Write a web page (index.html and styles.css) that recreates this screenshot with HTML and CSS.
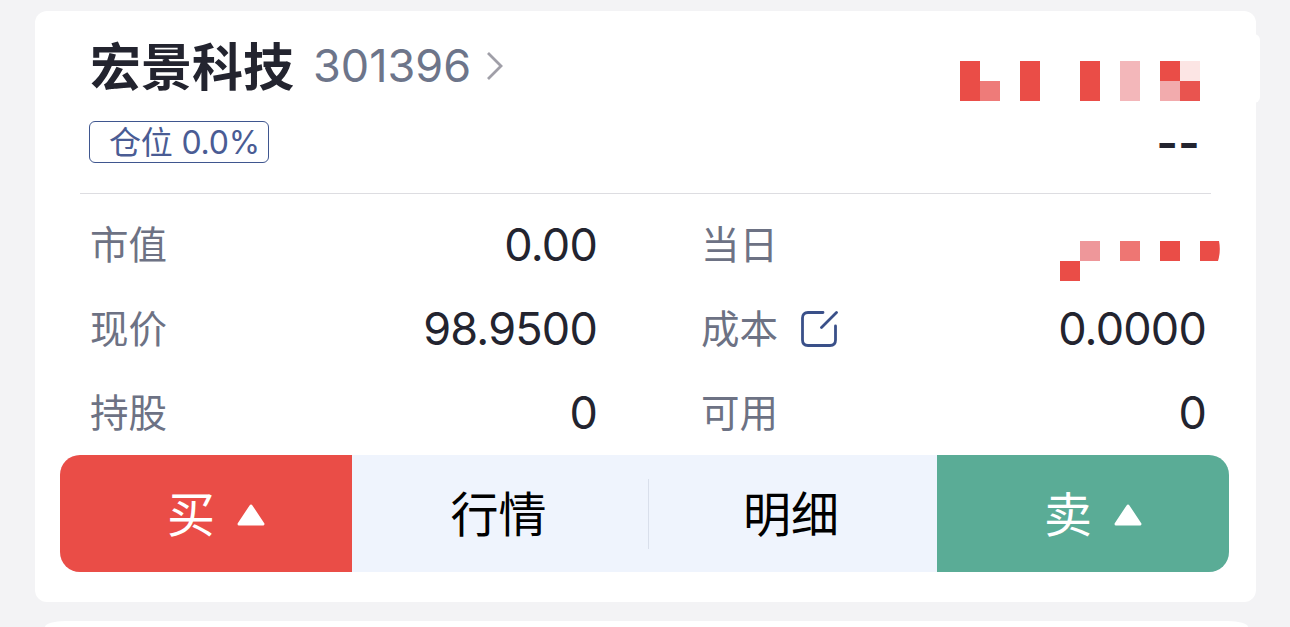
FILE: index.html
```
<!DOCTYPE html>
<html lang="zh-CN">
<head>
    <meta charset="UTF-8">
    <meta name="viewport" content="width=device-width, initial-scale=1.0">
    <title>持仓</title>
    <link rel="stylesheet" href="styles.css">
</head>
<body>
    <div class="card">
        <div class="card-header">
            <div class="stock">
                <div class="stock-title">
                    <h1>宏景科技</h1>
                    <span class="code">301396</span>
                    <svg class="chevron" width="18" height="30" viewBox="0 0 18 30">
                        <path d="M2 2 L15 15 L2 28" fill="none" stroke="#a09fa8" stroke-width="2.8"/>
                    </svg>
                </div>
                <span class="tag">仓位 0.0%</span>
            </div>
            <div class="profit">
                <!-- hidden amount -->
                <svg class="mosaic" width="240" height="40" viewBox="0 0 12 2" shape-rendering="crispEdges">
                    <path fill="#ea4d47" d="M0 0h1v2h-1z M3 0h1v2h-1z M6 0h1v2h-1z M10 0h1v1h-1z"/>
                    <path fill="#ee7b79" d="M1 1h1v1h-1z"/>
                    <path fill="#f3b7ba" d="M8 0h1v2h-1z"/>
                    <path fill="#fce5e4" d="M11 0h1v1h-1z"/>
                    <path fill="#f2abad" d="M10 1h1v1h-1z"/>
                    <path fill="#e9544f" d="M11 1h1v1h-1z"/>
                </svg>
                <span class="rate">--</span>
            </div>
        </div>

        <div class="info">
            <div class="item"><span class="label">市值</span><span class="value">0.00</span></div>
            <div class="item">
                <span class="label">当日</span>
                <svg class="mosaic-small" width="160" height="40" viewBox="0 0 160 40">
                    <path fill="#ea4d47" d="M0 20h20v20H0z M100 0h20v20h-20z M140 0h19q2 10 -1 20h-18z"/>
                    <path fill="#ee979a" d="M20 0h20v20H20z"/>
                    <path fill="#ee7673" d="M60 0h20v20H60z"/>
                </svg>
            </div>
            <div class="item"><span class="label">现价</span><span class="value">98.9500</span></div>
            <div class="item">
                <span class="label">成本</span>
                <svg class="edit" width="38" height="38" viewBox="0 0 38 38">
                    <path d="M23 2.5H8Q2.5 2.5 2.5 8V30Q2.5 35.5 8 35.5H30Q35.5 35.5 35.5 30V16M21.5 17.5L36.5 2.5" fill="none" stroke="#3a5089" stroke-width="2.8" stroke-linecap="round"/>
                </svg>
                <span class="value">0.0000</span>
            </div>
            <div class="item"><span class="label">持股</span><span class="value">0</span></div>
            <div class="item"><span class="label">可用</span><span class="value">0</span></div>
        </div>

        <div class="actions">
            <button class="buy">
                买
                <svg width="28" height="22" viewBox="0 0 28 22"><path d="M14 2L26 20H2Z" fill="#fff" stroke="#fff" stroke-width="3" stroke-linejoin="round"/></svg>
            </button>
            <button class="quote">行情</button>
            <button class="detail">明细</button>
            <button class="sell">
                卖
                <svg width="28" height="22" viewBox="0 0 28 22"><path d="M14 2L26 20H2Z" fill="#fff" stroke="#fff" stroke-width="3" stroke-linejoin="round"/></svg>
            </button>
        </div>
    </div>
    <div class="card next-card"></div>
</body>
</html>
```
FILE: styles.css
```
* {
    box-sizing: border-box;
}
body {
    margin: 0;
    padding: 11px 34px 0 35px;
    height: 627px;
    background-color: #f3f3f5;
    color: #23242f;
    font-family: Inter, "Noto Sans CJK SC", sans-serif;
}
.card {
    position: relative;
    height: 591px;
    border-radius: 12px;
    background-color: #fff;
}
/* small bulge on the right edge */
.card::after {
    content: "";
    position: absolute;
    top: 23px;
    right: -4px;
    width: 12px;
    height: 69px;
    border-radius: 6px;
    background-color: #fff;
}
.card-header {
    display: flex;
    justify-content: space-between;
    height: 183px;
    margin: 0 45px;
    padding: 25px 11px 0 9px;
    border-bottom: 1px solid #dddde1;
}
.stock-title {
    display: flex;
    align-items: center;
    height: 60px;
}
h1 {
    margin: 0;
    padding: 3px 0 0 1px;
    font-size: 51px;
    font-weight: 700;
    line-height: 60px;
}
.code {
    margin-left: 19px;
    color: #6d758a;
    font-size: 45px;
    line-height: 60px;
}
.chevron {
    margin-left: 15px;
}
.tag {
    display: block;
    width: 180px;
    height: 42px;
    margin-top: 25px;
    padding-left: 19px;
    border: 1.5px solid #3f568f;
    border-radius: 6px;
    color: #4a5c94;
    font-size: 32px;
    line-height: 41px;
    letter-spacing: -0.2px;
    white-space: nowrap;
}
.profit {
    display: flex;
    flex-direction: column;
    align-items: flex-end;
    padding-top: 25px;
}
.rate {
    margin-top: 17px;
    font-size: 47px;
    font-weight: 600;
    line-height: 50px;
}
.info {
    display: grid;
    grid-template-columns: 506px 504px;
    column-gap: 105px;
    grid-auto-rows: 84px;
    height: 250px;
    padding: 9px 0 0 55px;
}
.item {
    display: flex;
    align-items: center;
}
.label {
    color: #6d7284;
    font-size: 38.5px;
    line-height: 60px;
}
.value {
    margin: 0 -1px 0 auto;
    font-size: 45px;
    line-height: 60px;
    letter-spacing: -0.8px;
}
.mosaic-small {
    margin: 32px -15px 0 auto;
}
.edit {
    margin-left: 22px;
}
.actions {
    display: grid;
    grid-template-columns: 292px 293px 292px 292px;
    height: 117px;
    margin: 11px 0 0 25px;
    width: 1169px;
    border-radius: 20px;
    overflow: hidden;
    background-color: #eff4fd;
}
button {
    display: flex;
    align-items: center;
    justify-content: center;
    gap: 22px;
    padding: 2px 0 0;
    border: none;
    background: none;
    color: #000;
    font-family: inherit;
    font-size: 48px;
    line-height: 60px;
}
.buy, .sell {
    padding-left: 20px;
    color: #fff;
}
.buy {
    background-color: #ea4d47;
}
.sell {
    background-color: #5aac96;
}
.detail {
    background: linear-gradient(#d9dfeb, #d9dfeb) 3px 50% / 1px 70px no-repeat;
}
.next-card {
    height: 6px;
    margin: 19px 8px 0 10px;
    border-radius: 20px 20px 0 0 / 6px 6px 0 0;
}
.next-card::after {
    display: none;
}
```
